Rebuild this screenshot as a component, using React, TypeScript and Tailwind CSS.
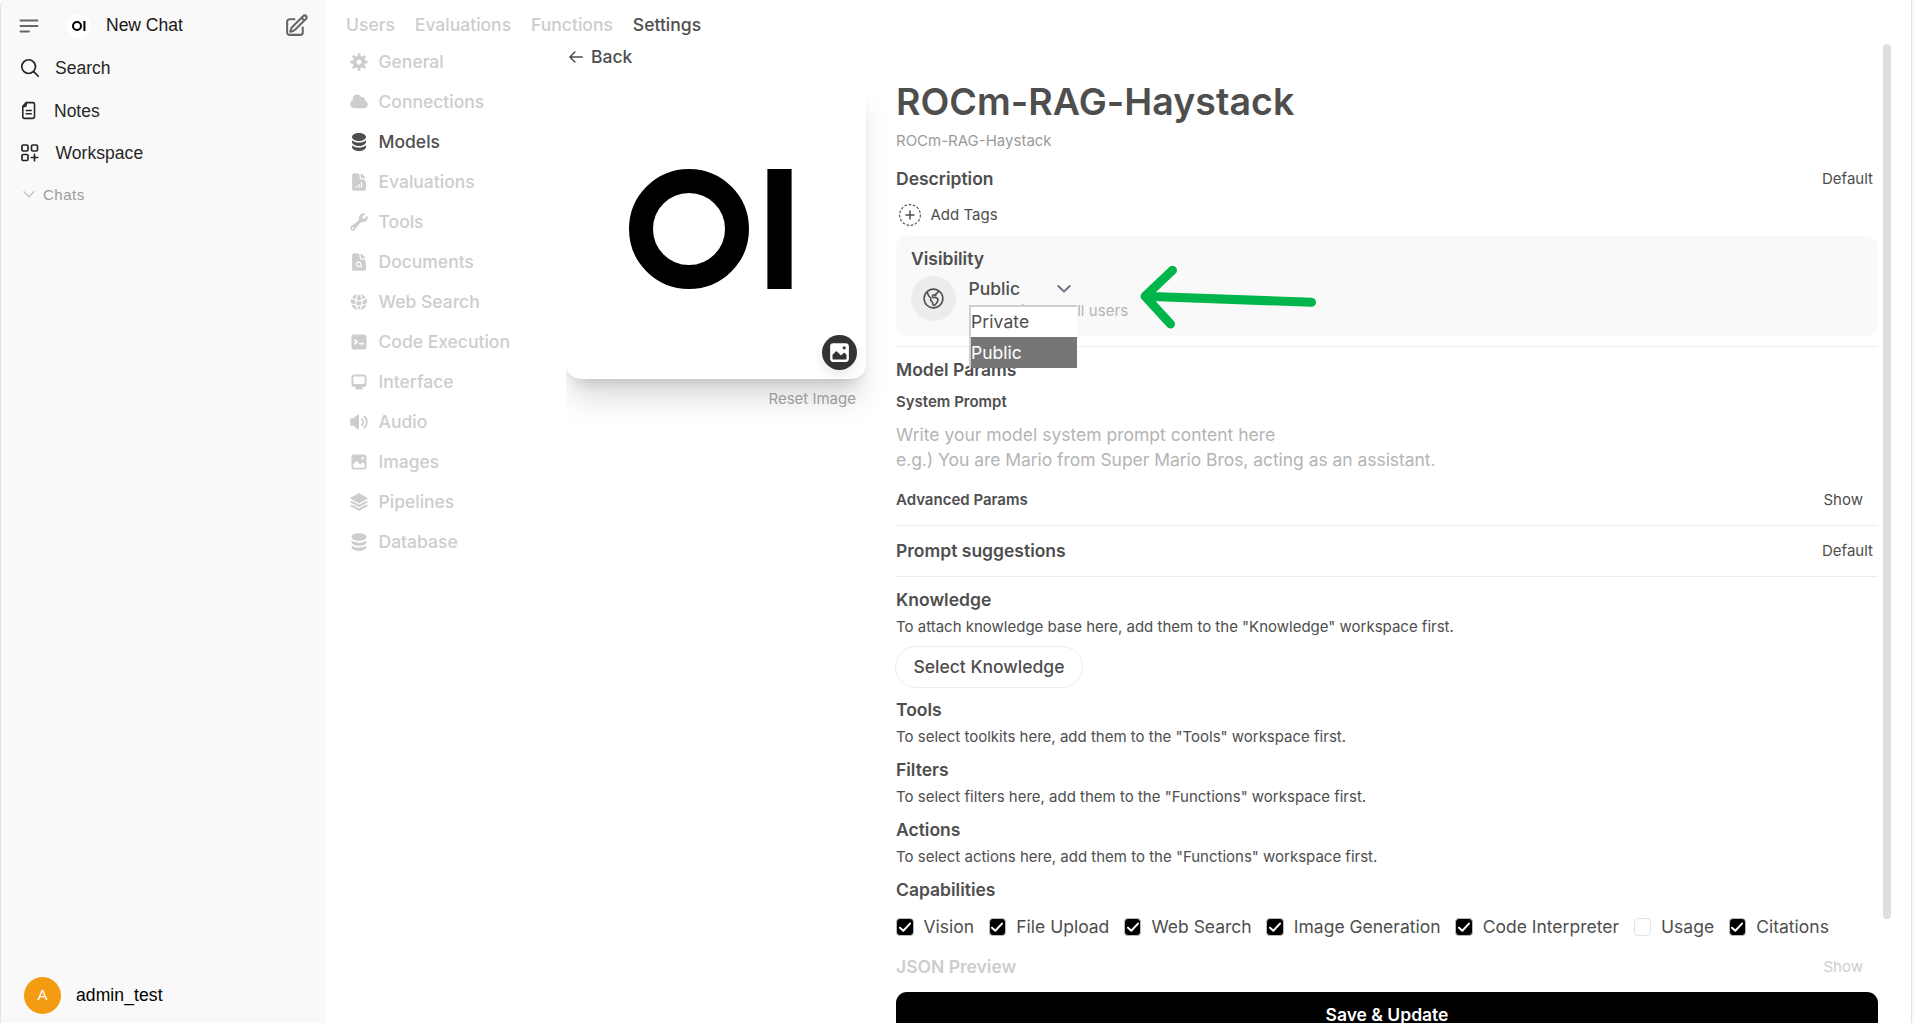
import React from "react";
import {
  HiDocumentChartBar,
  HiDocumentMagnifyingGlass,
  HiGlobeAlt,
  HiSquare3Stack3D,
} from "react-icons/hi2";

const paths = {
  cog: "M6.955 1.45A.5.5 0 0 1 7.452 1h1.096a.5.5 0 0 1 .497.45l.17 1.699c.484.12.94.312 1.356.562l1.321-1.081a.5.5 0 0 1 .67.033l.774.775a.5.5 0 0 1 .034.67l-1.08 1.32c.25.417.44.873.561 1.357l1.699.17a.5.5 0 0 1 .45.497v1.096a.5.5 0 0 1-.45.497l-1.699.17c-.12.484-.312.94-.562 1.356l1.082 1.322a.5.5 0 0 1-.034.67l-.774.774a.5.5 0 0 1-.67.033l-1.322-1.08c-.416.25-.872.44-1.356.561l-.17 1.699a.5.5 0 0 1-.497.45H7.452a.5.5 0 0 1-.497-.45l-.17-1.699a4.973 4.973 0 0 1-1.356-.562L4.108 13.37a.5.5 0 0 1-.67-.033l-.774-.775a.5.5 0 0 1-.034-.67l1.08-1.32a4.971 4.971 0 0 1-.561-1.357l-1.699-.17A.5.5 0 0 1 1 8.548V7.452a.5.5 0 0 1 .45-.497l1.699-.17c.12-.484.312-.94.562-1.356L2.629 4.107a.5.5 0 0 1 .034-.67l.774-.774a.5.5 0 0 1 .67-.033L5.43 3.71a4.97 4.97 0 0 1 1.356-.561l.17-1.699ZM6 8c0 .538.212 1.026.558 1.385l.057.057a2 2 0 0 0 2.828-2.828l-.058-.056A2 2 0 0 0 6 8Z",
  cloud:
    "M1 9.5A3.5 3.5 0 0 0 4.5 13H12a3 3 0 0 0 .917-5.857 2.503 2.503 0 0 0-3.198-3.019 3.5 3.5 0 0 0-6.628 2.171A3.5 3.5 0 0 0 1 9.5Z",
  stack20:
    "M10 1c3.866 0 7 1.79 7 4s-3.134 4-7 4-7-1.79-7-4 3.134-4 7-4zm5.694 8.13c.464-.264.91-.583 1.306-.952V10c0 2.21-3.134 4-7 4s-7-1.79-7-4V8.178c.396.37.842.688 1.306.953C5.838 10.006 7.854 10.5 10 10.5s4.162-.494 5.694-1.37zM3 13.179V15c0 2.21 3.134 4 7 4s7-1.79 7-4v-1.822c-.396.37-.842.688-1.306.953-1.532.875-3.548 1.369-5.694 1.369s-4.162-.494-5.694-1.37A7.009 7.009 0 013 13.179z",
  wrench:
    "M11.5 8a3.5 3.5 0 0 0 3.362-4.476c-.094-.325-.497-.39-.736-.15L12.099 5.4a.48.48 0 0 1-.653.033 8.554 8.554 0 0 1-.879-.879.48.48 0 0 1 .033-.653l2.027-2.028c.24-.239.175-.642-.15-.736a3.502 3.502 0 0 0-4.476 3.427c.018.99-.133 2.093-.914 2.7l-5.31 4.13a2.015 2.015 0 1 0 2.828 2.827l4.13-5.309c.607-.78 1.71-.932 2.7-.914L11.5 8ZM3 13.75a.75.75 0 1 0 0-1.5.75.75 0 0 0 0 1.5Z",
  terminal:
    "M2 4a2 2 0 0 1 2-2h8a2 2 0 0 1 2 2v8a2 2 0 0 1-2 2H4a2 2 0 0 1-2-2V4Zm2.22 1.97a.75.75 0 0 0 0 1.06l.97.97-.97.97a.75.75 0 1 0 1.06 1.06l1.5-1.5a.75.75 0 0 0 0-1.06l-1.5-1.5a.75.75 0 0 0-1.06 0ZM8.75 8.5a.75.75 0 0 0 0 1.5h2.5a.75.75 0 0 0 0-1.5h-2.5Z",
  desktop:
    "M2 4.25A2.25 2.25 0 0 1 4.25 2h7.5A2.25 2.25 0 0 1 14 4.25v5.5A2.25 2.25 0 0 1 11.75 12h-1.312c.1.128.21.248.328.36a.75.75 0 0 1 .234.545v.345a.75.75 0 0 1-.75.75h-4.5a.75.75 0 0 1-.75-.75v-.345a.75.75 0 0 1 .234-.545c.118-.111.228-.232.328-.36H4.25A2.25 2.25 0 0 1 2 9.75v-5.5Zm2.25-.75a.75.75 0 0 0-.75.75v4.5c0 .414.336.75.75.75h7.5a.75.75 0 0 0 .75-.75v-4.5a.75.75 0 0 0-.75-.75h-7.5Z",
  speaker:
    "M7.557 2.066A.75.75 0 0 1 8 2.75v10.5a.75.75 0 0 1-1.248.56L3.59 11H2a1 1 0 0 1-1-1V6a1 1 0 0 1 1-1h1.59l3.162-2.81a.75.75 0 0 1 .805-.124ZM12.95 3.05a.75.75 0 1 0-1.06 1.06 5.5 5.5 0 0 1 0 7.78.75.75 0 1 0 1.06 1.06 7 7 0 0 0 0-9.9Z M10.828 5.172a.75.75 0 1 0-1.06 1.06 2.5 2.5 0 0 1 0 3.536.75.75 0 1 0 1.06 1.06 4 4 0 0 0 0-5.656Z",
  photo:
    "M2 4a2 2 0 0 1 2-2h8a2 2 0 0 1 2 2v8a2 2 0 0 1-2 2H4a2 2 0 0 1-2-2V4Zm10.5 5.707a.5.5 0 0 0-.146-.353l-1-1a.5.5 0 0 0-.708 0L9.354 9.646a.5.5 0 0 1-.708 0L6.354 7.354a.5.5 0 0 0-.708 0l-2 2a.5.5 0 0 0-.146.353V12a.5.5 0 0 0 .5.5h8a.5.5 0 0 0 .5-.5V9.707ZM12 5a1 1 0 1 1-2 0 1 1 0 0 1 2 0Z",
  database:
    "M8 7c3.314 0 6-1.343 6-3s-2.686-3-6-3-6 1.343-6 3 2.686 3 6 3Z M8 8.5c1.84 0 3.579-.37 4.914-1.037A6.33 6.33 0 0 0 14 6.78V8c0 1.657-2.686 3-6 3S2 9.657 2 8V6.78c.346.273.72.5 1.087.683C4.42 8.131 6.16 8.5 8 8.5Z M8 12.5c1.84 0 3.579-.37 4.914-1.037.366-.183.74-.41 1.086-.684V12c0 1.657-2.686 3-6 3s-6-1.343-6-3v-1.22c.346.273.72.5 1.087.683C4.42 12.131 6.16 12.5 8 12.5Z",
};

function Solid({ d, box = 16, className = "size-5" }: { d: string; box?: number; className?: string }) {
  return (
    <svg viewBox={`0 0 ${box} ${box}`} fill="currentColor" className={className}>
      <path fillRule="evenodd" clipRule="evenodd" d={d} />
    </svg>
  );
}

const tabs = ["Users", "Evaluations", "Functions", "Settings"];

const settings: { label: string; icon: React.ReactNode }[] = [
  { label: "General", icon: <Solid d={paths.cog} /> },
  { label: "Connections", icon: <Solid d={paths.cloud} /> },
  { label: "Models", icon: <Solid d={paths.stack20} box={20} /> },
  { label: "Evaluations", icon: <HiDocumentChartBar className="size-5" /> },
  { label: "Tools", icon: <Solid d={paths.wrench} /> },
  { label: "Documents", icon: <HiDocumentMagnifyingGlass className="size-5" /> },
  { label: "Web Search", icon: <HiGlobeAlt className="size-5" /> },
  { label: "Code Execution", icon: <Solid d={paths.terminal} /> },
  { label: "Interface", icon: <Solid d={paths.desktop} /> },
  { label: "Audio", icon: <Solid d={paths.speaker} /> },
  { label: "Images", icon: <Solid d={paths.photo} /> },
  { label: "Pipelines", icon: <HiSquare3Stack3D className="size-5" /> },
  { label: "Database", icon: <Solid d={paths.database} /> },
];

const capabilities: [string, boolean][] = [
  ["Vision", true],
  ["File Upload", true],
  ["Web Search", true],
  ["Image Generation", true],
  ["Code Interpreter", true],
  ["Usage", false],
  ["Citations", true],
];

function Sidebar() {
  return (
    <aside className="flex w-[326px] shrink-0 flex-col rounded-tl-md border-l border-[#e3e3e3] bg-[#f9f9f9] font-['Liberation_Sans',sans-serif] text-[17.5px] text-[#262626]">
      <div className="flex h-[51px] items-center pl-[18px] pr-[17px]">
        <svg viewBox="0 0 20 14" className="h-[14px] w-5 text-[#676767]" fill="none" stroke="currentColor" strokeWidth="1.9" strokeLinecap="round">
          <path d="M1.500 1.500h17M1.500 7h17M1.500 12.500h8.500" />
        </svg>
        <div className="ml-[28px] flex size-6 items-center justify-center rounded-full bg-white">
          <svg viewBox="0 0 14 10" className="h-[10px] w-[14px]">
            <circle cx="5" cy="5" r="4" fill="none" stroke="#000" strokeWidth="2" />
            <rect x="11.4" y="0" width="2" height="10" fill="#000" />
          </svg>
        </div>
        <span className="ml-[15px] flex-1 text-[#171717]">New Chat</span>
        <svg viewBox="0 0 24 24" className="size-[25px] text-[#676767]" fill="none" stroke="currentColor" strokeWidth="2" strokeLinecap="round" strokeLinejoin="round">
          <path d="m16.862 4.487 1.687-1.688a1.875 1.875 0 1 1 2.652 2.652L10.582 16.07a4.5 4.5 0 0 1-1.897 1.13L6 18l.8-2.685a4.5 4.5 0 0 1 1.13-1.897l8.932-8.931Zm0 0L19.5 7.125M18 14v4.75A2.25 2.25 0 0 1 15.75 21H5.25A2.25 2.25 0 0 1 3 18.75V8.25A2.25 2.25 0 0 1 5.25 6H10" />
        </svg>
      </div>
      <div className="flex h-[34px] items-center pl-[18px]">
        <svg viewBox="0 0 24 24" className="size-[22px]" fill="none" stroke="currentColor" strokeWidth="1.9" strokeLinecap="round">
          <path d="m21 21-5.197-5.197m0 0A7.5 7.5 0 1 0 5.196 5.196a7.5 7.5 0 0 0 10.607 10.607Z" />
        </svg>
        <span className="ml-[14px]">Search</span>
      </div>
      <div className="mt-[9px] flex h-[34px] items-center pl-[18px]">
        <svg viewBox="0 0 20 20" className="size-5" fill="none" stroke="currentColor" strokeWidth="1.6" strokeLinecap="round" strokeLinejoin="round">
          <path d="M7.200 1.600h6.700a1.600 1.600 0 0 1 1.600 1.600v12.600a1.600 1.600 0 0 1-1.600 1.600H5.400a1.600 1.600 0 0 1-1.600-1.600V5.200L7.200 1.600v2.400a1.400 1.400 0 0 1-1.400 1.400H3.800M7.200 9.500h5M7.200 12.800h5" />
        </svg>
        <span className="ml-[15px]">Notes</span>
      </div>
      <div className="mt-[8px] flex h-[34px] items-center pl-[19px]">
        <svg viewBox="0 0 20 20" className="size-5" fill="none" stroke="currentColor" strokeWidth="1.7" strokeLinecap="round" strokeLinejoin="round">
          <rect x="2" y="2" width="6" height="6" rx="1.3" />
          <rect x="11.5" y="2" width="6" height="6" rx="1.3" />
          <rect x="2" y="11.5" width="6" height="6" rx="1.3" />
          <path d="M14.5 11.3v6.4M11.3 14.5h6.4" />
        </svg>
        <span className="ml-[15.500px] tracking-[0.05px]">Workspace</span>
      </div>
      <div className="mt-[8px] flex h-[34px] items-center pl-[21.500px] text-[15px] text-[#9b9b9b]">
        <svg viewBox="0 0 12 8" className="h-2 w-3 text-[#c4c4c4]" fill="none" stroke="currentColor" strokeWidth="1.4" strokeLinecap="round" strokeLinejoin="round">
          <path d="M1 .7l5 5 5-5" />
        </svg>
        <span className="ml-[8.500px] tracking-[0.5px]">Chats</span>
      </div>
      <div className="mt-auto mb-[9px] flex items-center pl-[23px] text-black">
        <div className="flex size-[37px] items-center justify-center rounded-full bg-[#f39c12] text-[15px] text-white">A</div>
        <span className="ml-[15px] tracking-[0.1px]">admin_test</span>
      </div>
    </aside>
  );
}

function Heading({ children, right }: { children: React.ReactNode; right?: string }) {
  return (
    <div className="flex items-center justify-between">
      <span className="text-[17.5px] font-semibold">{children}</span>
      {right && <span className="text-[15px]">{right}</span>}
    </div>
  );
}

function Section({ title, text }: { title: string; text: string }) {
  return (
    <div>
      <h3 className="flex h-9 items-center text-[17.5px] font-semibold">{title}</h3>
      <p className="text-[15px] leading-[18px]">{text}</p>
    </div>
  );
}

function Visibility() {
  return (
    <div className="relative mt-2 h-[100px] rounded-xl bg-[#f9f9f9] px-[15px] pt-3">
      <div className="text-[17.5px] leading-[22px] font-semibold">Visibility</div>
      <div className="mt-[6px] flex items-center">
        <div className="flex size-[45px] items-center justify-center rounded-full bg-[#ececec]">
          <svg viewBox="0 0 24 24" className="size-[25px]" fill="none" stroke="currentColor" strokeWidth="1.5" strokeLinecap="round" strokeLinejoin="round">
            <path d="M6.115 5.19l.319 1.913A6 6 0 008.11 10.36L9.75 12l-.387.775c-.217.433-.132.956.21 1.298l1.348 1.348c.21.21.329.497.329.795v1.089c0 .426.24.815.622 1.006l.153.076c.433.217.956.132 1.298-.21l.723-.723a8.7 8.7 0 002.288-4.042 1.087 1.087 0 00-.358-1.099l-1.33-1.108c-.251-.21-.582-.299-.905-.245l-1.17.195a1.125 1.125 0 01-.98-.314l-.295-.295a1.125 1.125 0 010-1.591l.13-.132a1.125 1.125 0 011.3-.21l.603.302a.809.809 0 001.086-1.086L14.25 7.5l1.256-.837a4.5 4.5 0 001.528-1.732l.146-.292M6.115 5.19A9 9 0 1017.18 4.64M6.115 5.19A8.965 8.965 0 0112 3c1.929 0 3.716.607 5.18 1.64" />
          </svg>
        </div>
        <div className="ml-[12.500px] w-[105px]">
          <div className="flex h-[26px] items-center justify-between text-[17.5px] font-medium">
            <span>Public</span>
            <svg viewBox="0 0 14 8" className="mr-[2.500px] h-2 w-[14px] text-[#6b7280]" fill="none" stroke="currentColor" strokeWidth="1.9" strokeLinecap="round" strokeLinejoin="round">
              <path d="M1.3 1l5.7 5.7L12.7 1" />
            </svg>
          </div>
          <div className="-mt-px mb-px h-[19px] text-[15px] leading-[19px] tracking-[0.05px] whitespace-nowrap text-[#b4b4b4]">
            Accessible to all users
          </div>
        </div>
      </div>
      <div className="absolute top-[69px] left-[73px] z-10 w-[108px] border-t-2 border-l-2 border-[#cfcfcf] bg-white text-[17.5px]">
        <div className="flex h-[30px] items-center pt-[1px] tracking-[0.1px]">Private</div>
        <div className="flex h-[31px] items-center bg-[#767676] pt-[1px] text-white">Public</div>
      </div>
      <svg viewBox="0 0 180 66" className="absolute top-[28px] left-[242px] h-[66px] w-[180px]" fill="none" stroke="#00b64b" strokeWidth="9" strokeLinecap="round" strokeLinejoin="round">
        <path d="M173.500 38.300L7 32.300M34.500 6.300L7 32.300L32.500 60" />
      </svg>
    </div>
  );
}

function ModelForm() {
  return (
    <div className="ml-[30px] mt-[33px] w-[982px] text-[#4e4e4e]">
      <h1 className="flex h-[50px] items-center pt-[2px] text-[37.5px] font-semibold tracking-[0.04px]">ROCm-RAG-Haystack</h1>
      <div className="flex h-[30px] items-center text-[15px] text-[#9b9b9b]">ROCm-RAG-Haystack</div>
      <div className="grid h-[46px] items-center pr-[5px]">
        <Heading right="Default">Description</Heading>
      </div>
      <div className="flex h-[26px] items-center pl-[3px] text-[15px]">
        <svg viewBox="0 0 22 22" className="size-[22px]" fill="none" stroke="currentColor">
          <circle cx="11" cy="11" r="10.400" strokeDasharray="2.6 1.7" strokeWidth="1.1" />
          <path d="M11 7v8M7 11h8" strokeWidth="1.500" strokeLinecap="round" />
        </svg>
        <span className="ml-[9.500px]">Add Tags</span>
      </div>
      <Visibility />
      <div className="mt-[10px] h-px bg-[#ececec]" />
      <div className="grid h-[46px] items-center">
        <Heading>Model Params</Heading>
      </div>
      <div className="text-[15px] leading-[18px] font-semibold">System Prompt</div>
      <div className="mt-[11px] mb-[9px] text-[17.5px] leading-[25px] text-[#b4b4b4]">
        Write your model system prompt content here
        <br />
        <span className="tracking-[-0.045px]">e.g.) You are Mario from Super Mario Bros, acting as an assistant.</span>
      </div>
      <div className="flex h-[38px] items-center justify-between pr-[15px] text-[15px]">
        <span className="font-semibold">Advanced Params</span>
        <span>Show</span>
      </div>
      <div className="mt-[6px] h-px bg-[#ececec]" />
      <div className="grid h-[50px] items-center pr-[5px]">
        <Heading right="Default">Prompt suggestions</Heading>
      </div>
      <div className="mb-[5px] h-px bg-[#ececec]" />
      <Section title="Knowledge" text={'To attach knowledge base here, add them to the "Knowledge" workspace first.'} />
      <button className="mt-[10px] mb-1 -ml-px flex h-[42px] w-[188px] items-center justify-center rounded-full border border-[#ececec] text-[17.5px] font-medium">
        Select Knowledge
      </button>
      <div className="flex flex-col gap-[6px]">
        <Section title="Tools" text={'To select toolkits here, add them to the "Tools" workspace first.'} />
        <Section title="Filters" text={'To select filters here, add them to the "Functions" workspace first.'} />
        <Section title="Actions" text={'To select actions here, add them to the "Functions" workspace first.'} />
        <h3 className="flex h-9 items-center text-[17.5px] font-semibold">Capabilities</h3>
      </div>
      <div className="flex h-[38px] items-center gap-[14.600px] text-[17.5px]">
        {capabilities.map(([label, on]) => (
          <div key={label} className="flex items-center gap-[10px]">
            {on ? (
              <span className="flex size-[17.500px] items-center justify-center rounded-[4px] border border-[#b9b9b9] bg-black">
                <svg viewBox="0 0 16 16" className="size-4 shrink-0" fill="none" stroke="#fff" strokeWidth="2" strokeLinecap="round" strokeLinejoin="round">
                  <path d="M3 8.700l3.300 3L13 4.600" />
                </svg>
              </span>
            ) : (
              <span className="size-[17.500px] rounded-[4px] border border-[#e3e3e3] bg-white" />
            )}
            <span>{label}</span>
          </div>
        ))}
      </div>
      <div className="flex h-[42px] items-center justify-between pr-[15px] text-[#cdcdcd]">
        <span className="text-[17.5px] font-semibold">JSON Preview</span>
        <span className="text-[15px]">Show</span>
      </div>
      <button className="mt-1 flex h-[46px] w-full items-center justify-center rounded-[11px] bg-black text-[17.5px] font-semibold text-white">
        Save &amp; Update
      </button>
    </div>
  );
}

export default function App() {
  return (
    <div className="flex h-[1023px] w-[1915px] overflow-hidden bg-white font-['Inter',sans-serif]">
      <Sidebar />
      <main className="flex w-[1585px] shrink-0 flex-col">
        <nav className="flex h-[43px] items-center gap-5 pt-[8px] pl-5 text-[17.5px] font-medium text-[#cdcdcd]">
          {tabs.map((t) => (
            <span key={t} className={t === "Settings" ? "text-[#4e4e4e]" : ""}>
              {t}
            </span>
          ))}
        </nav>
        <div className="flex min-h-0 flex-1 overflow-hidden">
          <ul className="-mt-px w-[240px] shrink-0 pl-[23px] text-[17.5px] font-medium text-[#cdcdcd]">
            {settings.map((s) => (
              <li key={s.label} className={s.label === "Models" ? "flex h-10 items-center gap-[9.500px] text-[#4e4e4e]" : "flex h-10 items-center gap-[9.500px]"}>
                {s.icon}
                {s.label}
              </li>
            ))}
          </ul>
          <div className="flex flex-1 overflow-hidden">
            <div className="w-[300px] shrink-0 text-[#4e4e4e]">
              <div className="flex h-[28px] items-center pl-[3px] text-[17.5px] font-medium">
                <svg viewBox="0 0 14 12" className="h-3 w-[14px]" fill="none" stroke="currentColor" strokeWidth="1.500" strokeLinecap="round" strokeLinejoin="round">
                  <path d="M13.300 6H.9M5.900 1L.9 6l5 5" />
                </svg>
                <span className="ml-2">Back</span>
              </div>
              <div className="relative mt-2 size-[300px] rounded-[15px] bg-white shadow-[0_25px_31px_-6px_rgba(0,0,0,0.14),0_10px_12.5px_-7.5px_rgba(0,0,0,0.14)]">
                <svg viewBox="0 0 300 300" className="size-[300px]">
                  <circle cx="123" cy="150" r="48" fill="none" stroke="#000" strokeWidth="24" />
                  <rect x="201.400" y="90" width="24.200" height="120" fill="#000" />
                </svg>
                <div className="absolute right-[9px] bottom-[9px] flex size-[35px] items-center justify-center rounded-full bg-[#333] text-white shadow-[0_6px_12px_rgba(0,0,0,0.08)]">
                  <Solid d={paths.photo} className="size-[25px]" />
                </div>
              </div>
              <div className="relative mt-[10px] pr-[10px] text-right text-[15px] leading-5 text-[#9b9b9b]">Reset Image</div>
            </div>
            <ModelForm />
          </div>
        </div>
      </main>
      <div className="w-1 border-l border-[#e3e3e3] bg-[#f9f9f9]" />
      <div className="absolute top-[44px] left-[1883px] h-[875px] w-2 rounded-full bg-[#dfdfdf]" />
    </div>
  );
}
